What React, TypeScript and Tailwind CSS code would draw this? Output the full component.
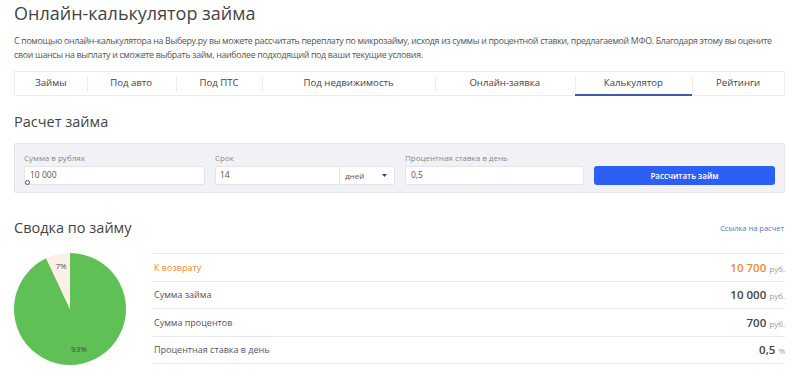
import React from "react";

const tabs = [
  { label: "Займы", w: 72 },
  { label: "Под авто", w: 89 },
  { label: "Под ПТС", w: 87 },
  { label: "Под недвижимость", w: 173 },
  { label: "Онлайн-заявка", w: 140 },
  { label: "Калькулятор", w: 118, active: true },
  { label: "Рейтинги", w: 92 },
];

const rows = [
  { label: "К возврату", value: "10 700", unit: "руб.", accent: true },
  { label: "Сумма займа", value: "10 000", unit: "руб." },
  { label: "Сумма процентов", value: "700", unit: "руб." },
  { label: "Процентная ставка в день", value: "0,5", unit: "%" },
];

function Pie() {
  const cx = 56, cy = 56, r = 56;
  const a = 0.07 * 2 * Math.PI;
  const x = cx - r * Math.sin(a);
  const y = cy - r * Math.cos(a);
  return (
    <svg width="112" height="112" viewBox="0 0 112 112">
      <path d={`M${cx} ${cy} L${cx} ${cy - r} A${r} ${r} 0 1 1 ${x} ${y} Z`} fill="#5fc155" />
      <path d={`M${cx} ${cy} L${x} ${y} A${r} ${r} 0 0 1 ${cx} ${cy - r} Z`} fill="#fbefe6" />
      <text x="47" y="16" fontSize="8" fill="#555" fontFamily="Open Sans, sans-serif" textAnchor="middle">7%</text>
      <text x="65" y="99" fontSize="8" fill="#444" fontFamily="Open Sans, sans-serif" textAnchor="middle">93%</text>
    </svg>
  );
}

export default function App() {
  return (
    <div className="w-[800px] h-[391px] bg-white overflow-hidden text-[#444]" style={{ fontFamily: '"Open Sans", sans-serif' }}>
      <div className="px-[14px] pt-[1px]">
        <h1 className="text-[18px] leading-[24px] text-[#444] font-normal">Онлайн-калькулятор займа</h1>
        <p className="mt-[10px] text-[8.8px] leading-[13.5px] tracking-[-0.3px] text-[#555]">
          С помощью онлайн-калькулятора на Выберу.ру вы можете рассчитать переплату по микрозайму, исходя из суммы и процентной ставки, предлагаемой МФО. Благодаря этому вы оцените свои шансы на выплату и сможете выбрать займ, наиболее подходящий под ваши текущие условия.
        </p>
        <div className="mt-[9px] flex h-[25px] w-[771px] border border-[#ececec]">
          {tabs.map((t, i) => (
            <div key={t.label} className="relative flex items-center justify-center text-[9.6px] text-[#444]" style={{ width: t.w }}>
              {i > 0 && <span className="absolute left-0 top-[5px] h-[15px] w-px bg-[#ececec]" />}
              {t.label}
              {t.active && <span className="absolute left-0 right-0 bottom-[-1px] h-[2px] bg-[#3e5aa8]" />}
            </div>
          ))}
        </div>
        <h2 className="mt-[16px] text-[14.5px] leading-[20px] text-[#444]">Расчет займа</h2>
        <div className="mt-[11px] w-[771px] h-[50px] bg-[#f2f2f6] border border-[#e4e4ea] rounded-[2px] px-[9px] pt-[8px] flex gap-[10px]">
          <div className="w-[181px] relative">
            <div className="text-[8px] leading-[12px] text-[#888]">Сумма в рублях</div>
            <div className="mt-[2px] h-[19px] bg-white border border-[#e4e4ea] rounded-[2px] flex items-center pl-[5px] text-[8.5px] text-[#555]">10 000</div>
            <span className="absolute left-[1px] top-[28px] w-[5px] h-[5px] rounded-full border border-[#555] bg-white" />
          </div>
          <div className="w-[180px]">
            <div className="text-[8px] leading-[12px] text-[#888]">Срок</div>
            <div className="mt-[2px] h-[19px] flex">
              <div className="flex-1 bg-white border border-[#e4e4ea] rounded-l-[2px] flex items-center pl-[4px] text-[8.5px] text-[#555]">14</div>
              <div className="w-[55px] bg-white border border-l-0 border-[#e4e4ea] rounded-r-[2px] flex items-center justify-between pl-[5px] pr-[7px] text-[8px] text-[#555]">
                <span>дней</span>
                <svg width="5" height="3" viewBox="0 0 5 3"><path d="M0 0 L5 0 L2.5 3 Z" fill="#444" /></svg>
              </div>
            </div>
          </div>
          <div className="w-[179px]">
            <div className="text-[8px] leading-[12px] text-[#888]">Процентная ставка в день</div>
            <div className="mt-[2px] h-[19px] bg-white border border-[#e4e4ea] rounded-[2px] flex items-center pl-[5px] text-[8.5px] text-[#555]">0,5</div>
          </div>
          <div className="w-[181px] pt-[14px]">
            <div className="h-[19px] bg-[#2e5ff5] rounded-[3px] flex items-center justify-center text-white text-[8px] font-semibold">Рассчитать займ</div>
          </div>
        </div>
        <div className="mt-[25px] flex items-center justify-between w-[771px]">
          <h2 className="text-[14.5px] leading-[20px] text-[#444]">Сводка по займу</h2>
          <a className="text-[7.5px] text-[#5474c0] mr-[1px] mt-[2px]">Ссылка на расчет</a>
        </div>
        <div className="mt-[15px] flex w-[771px]">
          <div className="w-[139px]">
            <Pie />
          </div>
          <div className="flex-1 border-t border-[#e8e8e8]">
            {rows.map((r) => (
              <div key={r.label} className="h-[27.5px] border-b border-[#e8e8e8] flex items-center justify-between pl-[1px]">
                <span className={`text-[9px] ${r.accent ? "text-[#ea8a2e]" : "text-[#555]"}`}>{r.label}</span>
                <span className="flex items-baseline gap-[3px]">
                  <span className={`text-[11.5px] font-semibold ${r.accent ? "text-[#ea8a2e]" : "text-[#444]"}`}>{r.value}</span>
                  <span className="text-[8px] text-[#999]">{r.unit}</span>
                </span>
              </div>
            ))}
          </div>
        </div>
      </div>
    </div>
  );
}
